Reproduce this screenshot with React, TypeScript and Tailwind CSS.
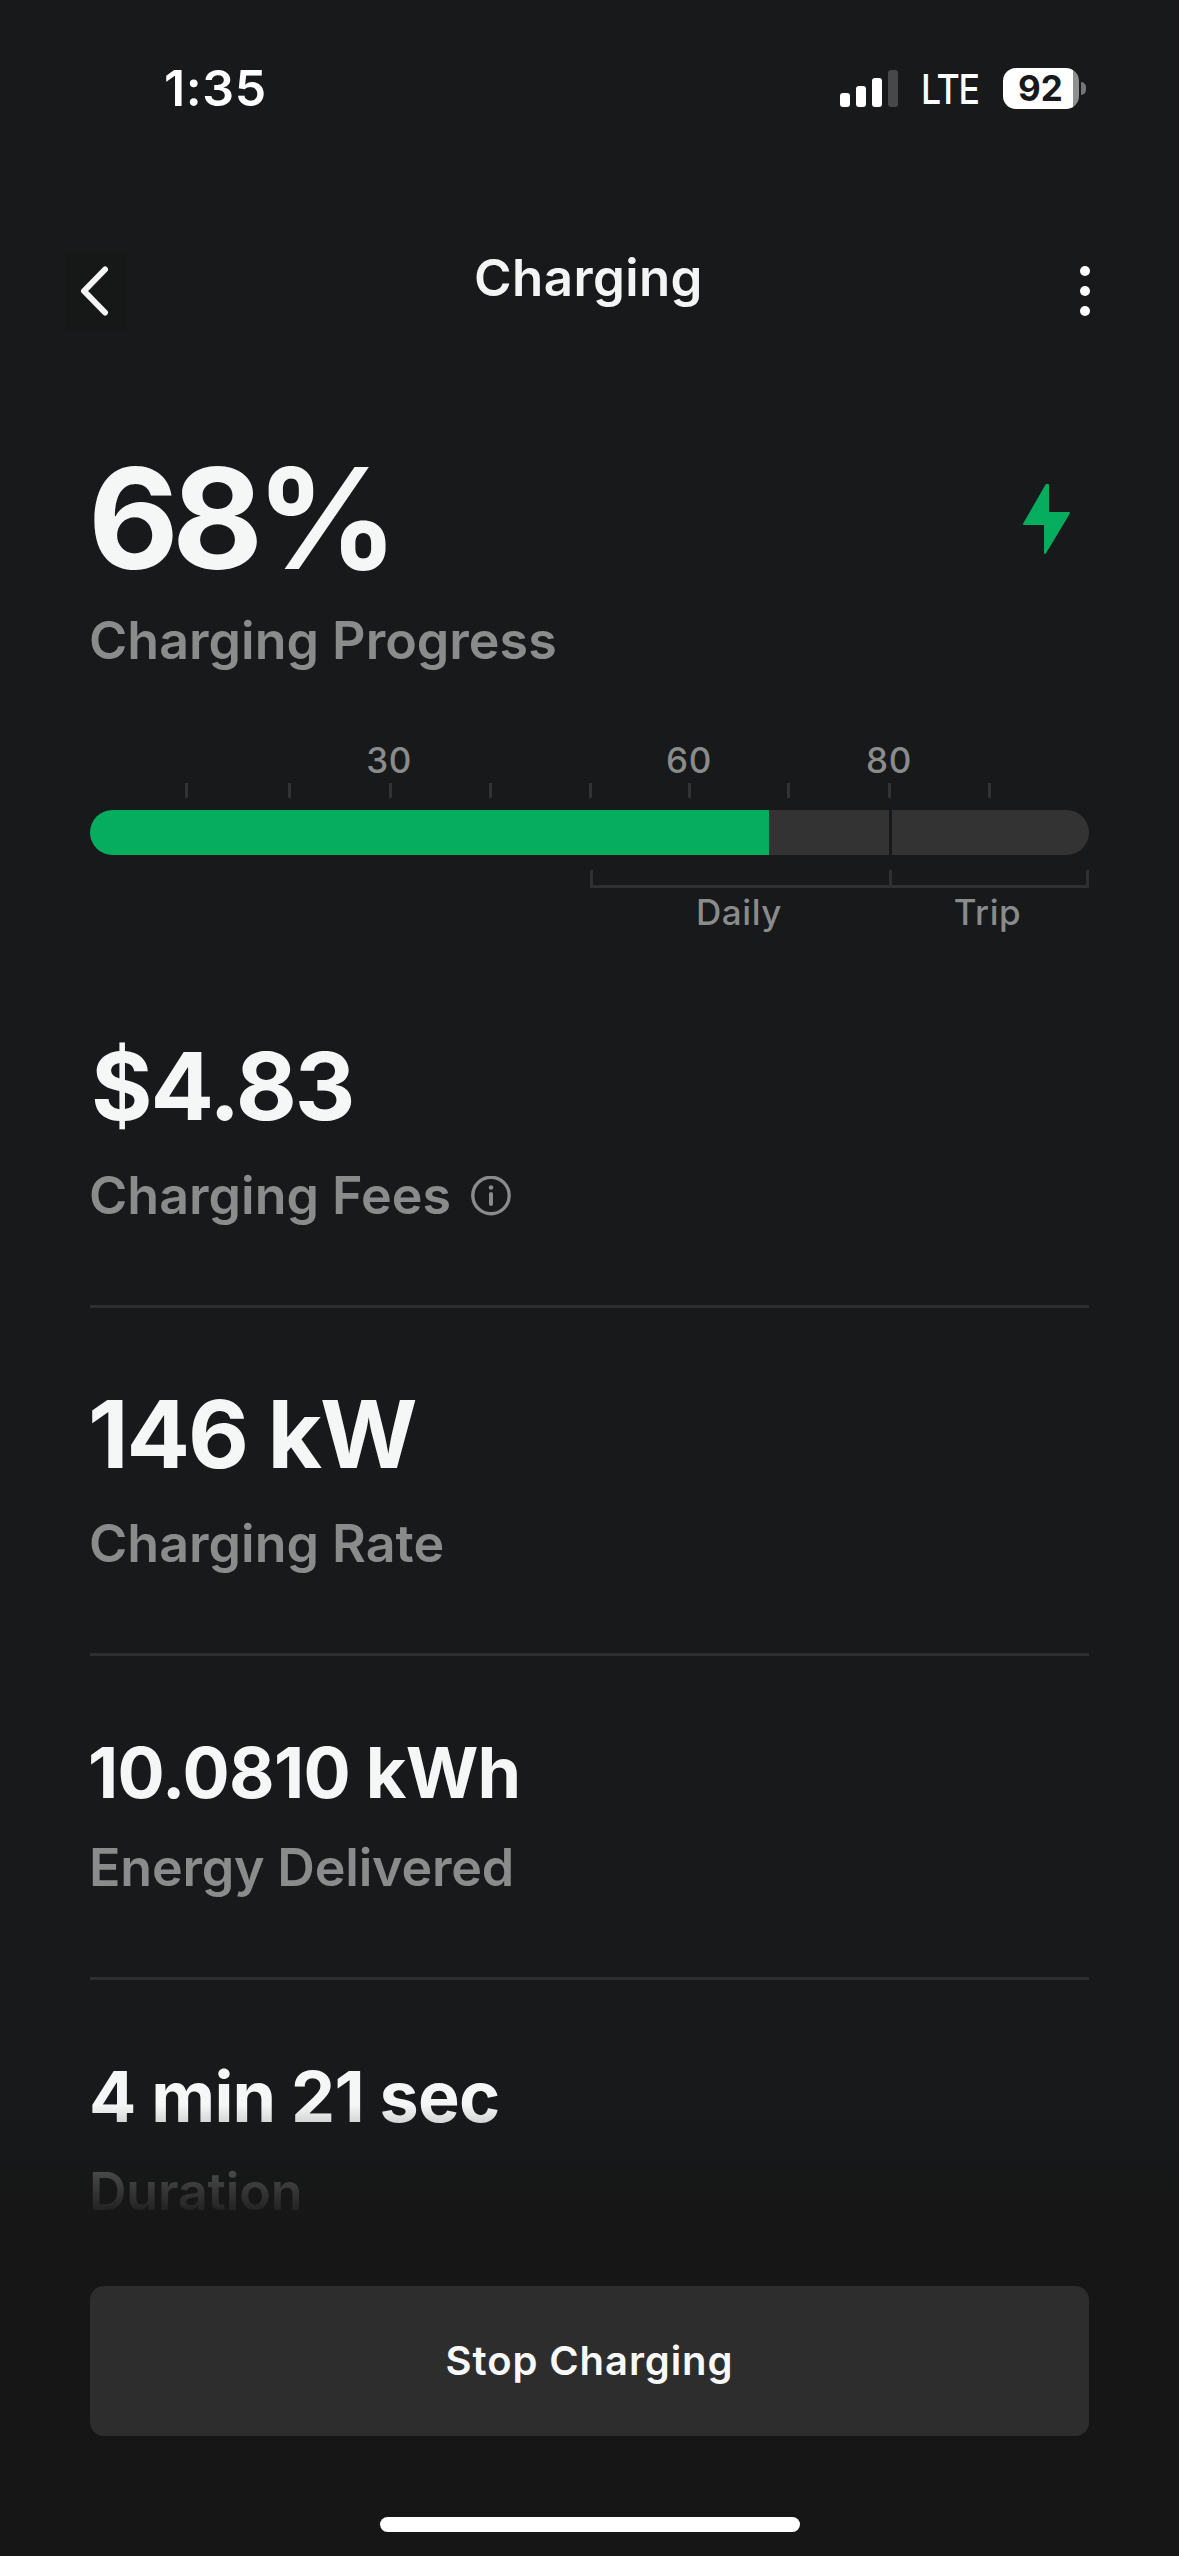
const TICKS = [96, 199, 300, 400, 500, 599, 698, 799, 899];

const StatusBar = () => (
  <div className="flex h-[176px] items-center justify-between pr-[93px] pl-[164px] text-white">
    <span className="text-[50px] leading-none font-semibold tracking-[0.6px]">
      1:35
    </span>
    <div className="flex items-center">
      <svg className="h-[37px] w-[58px]" viewBox="0 0 58 37" fill="currentColor">
        <rect x="0" y="23" width="10" height="14" rx="3" />
        <rect x="16" y="16" width="10" height="21" rx="3" />
        <rect x="32" y="8" width="10" height="29" rx="3" />
        <rect x="48" y="0" width="10" height="37" rx="3" fill="#474849" />
      </svg>
      <span className="mt-[2px] ml-[23px] w-[82px] origin-left scale-x-[0.87] text-[41px] leading-none font-medium tracking-[-1.5px]">
        LTE
      </span>
      <div className="flex items-center">
        <div className="flex h-[41px] w-[76px] items-center overflow-hidden rounded-[13px] bg-[linear-gradient(to_right,#fff_92%,#8e8f8f_92%)] pl-[15px] text-[35px] font-bold text-[#17191a]">
          92
        </div>
        <div className="ml-[2px] h-[13px] w-[5px] rounded-r-full bg-[#747575]" />
      </div>
    </div>
  </div>
);

const Header = () => (
  <header className="flex h-[230px] items-center justify-between px-[65px]">
    <button className="flex h-[80px] w-[62px] items-center justify-center bg-[#161717]">
      <svg className="h-[52px] w-[32px]" viewBox="0 0 32 52" fill="none">
        <path
          d="M25 4.500 4 26 25 47.500"
          stroke="#f5f5f5"
          strokeWidth="6"
          strokeLinecap="round"
          strokeLinejoin="round"
        />
      </svg>
    </button>
    <h1 className="pr-[2px] pb-[28px] text-[51px] leading-none font-[560] tracking-[0.4px] text-[#f3f4f4]">
      Charging
    </h1>
    <button className="flex w-[62px] flex-col items-center gap-[10px] pl-[4px]">
      <span className="size-[10px] rounded-full bg-white" />
      <span className="size-[10px] rounded-full bg-white" />
      <span className="size-[10px] rounded-full bg-white" />
    </button>
  </header>
);

const ChargeGauge = () => (
  <div className="mt-[69px] text-[35px] leading-[40px] font-medium tracking-[0.6px] text-[#8a8b8b]">
    <div className="flex">
      <span className="ml-[249px] w-[100px] text-center">30</span>
      <span className="ml-[200px] w-[100px] text-center">60</span>
      <span className="ml-[100px] w-[100px] text-center">80</span>
    </div>
    <svg className="mt-[3px] block h-[15px] w-[999px]" viewBox="0 0 999 15">
      {TICKS.map((x) => (
        <rect key={x} x={x - 1} y="0" width="3" height="15" fill="#313233" />
      ))}
    </svg>
    <div className="mt-[12px] flex h-[45px] overflow-hidden rounded-full">
      <div className="w-[679px] bg-[#06ad5e]" />
      <div className="w-[120px] bg-[#333333]" />
      <div className="ml-[3px] flex-1 bg-[#333333]" />
    </div>
    <div className="mt-[15px] ml-[500px] flex h-[18px] border-x-3 border-b-3 border-[#2f3031]">
      <div className="w-[299px] border-r-3 border-[#2f3031]" />
    </div>
    <div className="mt-[4px] ml-[500px] flex text-center">
      <span className="w-[298px]">Daily</span>
      <span className="w-[199px]">Trip</span>
    </div>
  </div>
);

const InfoIcon = () => (
  <svg className="ml-[20px] size-[40px]" viewBox="0 0 40 40" fill="none">
    <circle cx="20" cy="19.500" r="18.200" stroke="#8a8b8b" strokeWidth="3.400" />
    <circle cx="20" cy="11.500" r="2.300" fill="#8a8b8b" />
    <path d="M20 18v10" stroke="#8a8b8b" strokeWidth="4" strokeLinecap="round" />
  </svg>
);

export default function App() {
  return (
    <main className="relative flex h-[2556px] w-[1179px] flex-col overflow-hidden bg-[#17191a] font-['Inter',sans-serif]">
      <StatusBar />
      <Header />
      <div className="px-[90px] pt-[56px] text-[#f5f6f6]">
        <div className="flex h-[112px] items-center justify-between">
          <span className="ml-[-2px] text-[140px] leading-[112px] font-bold tracking-[-7px]">
            68%
          </span>
          <svg className="mt-[2px] mr-[18px] h-[72px] w-[49px]" viewBox="0 0 49 72">
            <path
              d="M24.500 2 2 41h21v29L47 30H26V2Z"
              fill="#06ad5e"
              stroke="#06ad5e"
              strokeWidth="2"
              strokeLinejoin="round"
            />
          </svg>
        </div>
        <p className="mt-[37px] ml-[-1px] text-[52px] leading-[60px] font-[560] text-[#8a8b8b]">
          Charging Progress
        </p>
        <ChargeGauge />

        <section className="mt-[106px] border-b-3 border-[#2d2e2f] pb-[79px]">
          <p className="ml-[1px] text-[94px] leading-[96px] font-bold tracking-[-2px]">
            $4.83
          </p>
          <div className="mt-[32px] ml-[-1px] flex items-center">
            <p className="text-[52px] leading-[60px] font-[560] text-[#8a8b8b]">
              Charging Fees
            </p>
            <InfoIcon />
          </div>
        </section>
        <section className="border-b-3 border-[#2d2e2f] pt-[78px] pb-[79px]">
          <p className="ml-[-2px] text-[94px] leading-[96px] font-bold tracking-[-2px]">
            146 kW
          </p>
          <p className="mt-[32px] ml-[-1px] text-[52px] leading-[60px] font-[560] text-[#8a8b8b]">
            Charging Rate
          </p>
        </section>
        <section className="border-b-3 border-[#2d2e2f] pt-[77px] pb-[79px]">
          <p className="ml-[-2px] text-[70px] leading-[80px] font-bold tracking-[-0.7px]">
            10.0810 kWh
          </p>
          <p className="mt-[25px] ml-[-1px] text-[52px] leading-[60px] font-[560] tracking-[-0.2px] text-[#8a8b8b]">
            Energy Delivered
          </p>
        </section>
        <section className="pt-[77px]">
          <p className="ml-[-1px] text-[70px] leading-[80px] font-bold tracking-[-0.8px]">
            4 min 21 sec
          </p>
          <p className="mt-[25px] ml-[-1px] text-[52px] leading-[60px] font-[560] tracking-[-0.2px] text-[#8a8b8b]">
            Duration
          </p>
        </section>
      </div>

      <div className="absolute inset-x-0 bottom-0 flex flex-col items-center">
        <div className="h-[118px] w-full bg-linear-to-b from-[#161616]/0 to-[#161616]" />
        <div className="flex h-[333px] w-full flex-col items-center bg-[#161616] pt-[63px]">
          <button className="h-[150px] w-[999px] rounded-[14px] bg-[#2d2d2d] text-[40px] font-semibold tracking-[0.9px] text-[#f8f8f8]">
            Stop Charging
          </button>
          <div className="mt-[81px] h-[15px] w-[420px] rounded-full bg-white" />
        </div>
      </div>
    </main>
  );
}
